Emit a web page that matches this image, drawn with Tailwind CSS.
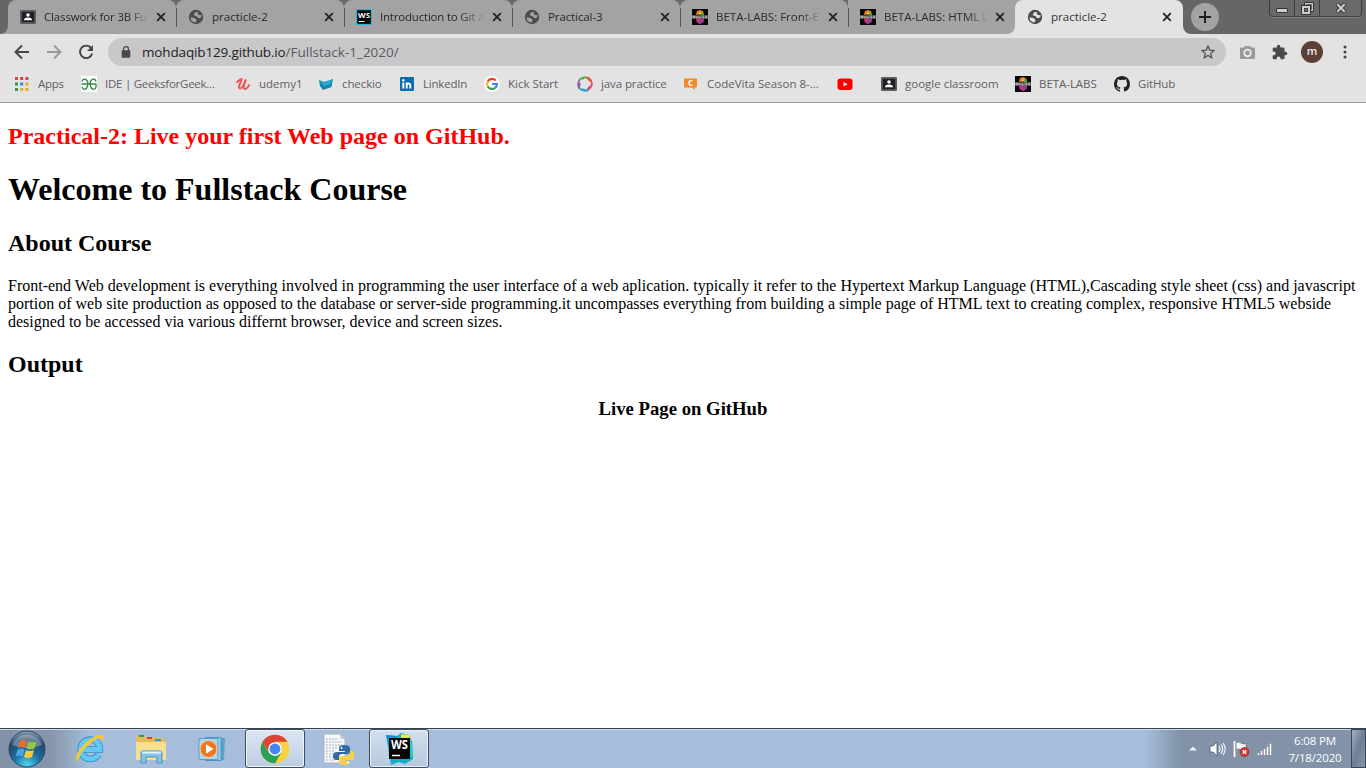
<!DOCTYPE html>
<html lang="en">
<head>
<meta charset="utf-8">
<title>practicle-2</title>
<script src="https://cdn.jsdelivr.net/npm/@tailwindcss/browser@4"></script>
</head>
<body class="w-[1366px] h-[768px] overflow-hidden bg-white flex flex-col font-['Open_Sans',sans-serif]">
<svg class="hidden">
  <defs>
    <symbol id="x" viewBox="0 0 10 10"><path d="M1.2 1.2l7.6 7.6M8.8 1.2l-7.6 7.6" stroke="#222" stroke-width="1.8"/></symbol>
    <symbol id="globe" viewBox="0 0 16 16"><circle cx="8" cy="8" r="7.2" fill="#4c4d50"/><g fill="var(--land,#a3a3a3)"><path d="M9.800 2.700L7.300 3.300 5.800 5.300l.7 1.500 2 .2 1.200 1.800 2 .4 1.700-1.400.2-1.800-1.300.3-1.800-.6-.8-1.500z"/><path d="M2.400 8.600l3.300.2 2.200 1.100.6 1.500-1.200 2.100-1.900-.5-2.100-1.800z"/></g></symbol>
    <symbol id="classroom" viewBox="0 0 16 16"><rect y="1" width="16" height="14" rx="1" fill="#5c5e64"/><rect x="1.8" y="2.8" width="12.4" height="10.4" fill="#1e2023"/><circle cx="8" cy="6" r="1.8" fill="#fff"/><path d="M3.8 11.3c.3-2 2-2.7 4.2-2.7s3.900.7 4.200 2.700z" fill="#fff"/></symbol>
    <symbol id="beta" viewBox="0 0 16 16"><path fill="#090909" d="M0 0h16v16H0z"/><path d="M5 2l3-1 3 1.300 1.200 3.500H3.800z" fill="#e9792d"/><path d="M6 5l3-3 2 3z" fill="#f4bc3d"/><path d="M9 3l3 1v3H9z" fill="#4da33d"/><path d="M4 9h8.500l-1 4L8 15.300 4.600 13z" fill="#d52e78"/><path d="M8 10h4l-1 3-3 2z" fill="#8a3f98"/><path d="M0 6.300h16v3.400H0z" fill="#626262"/><path d="M1 7.200v1.700h1.500V7.200zM4 9V7.200l2 1.700M7 7.200v1.700h1.500M10 9l1-1.700L12 9M13.200 7.200h1.500L13.500 9h1.500" stroke="#ccc" fill="none" stroke-width=".7"/></symbol>
  </defs>
</svg>

<!-- tab strip -->
<header class="h-[34px] shrink-0 bg-[#666] flex text-[11.5px] leading-4 text-[#2a2a2a]">
  <div class="w-2 bg-[#a3a3a3]"><div class="size-full bg-[#666] rounded-br-lg"></div></div>
  <div class="w-[168px] bg-[#a3a3a3] rounded-t-lg flex items-center pl-3"><svg class="size-4 mr-2 shrink-0"><use href="#classroom"/></svg><div class="w-[106px] mr-[6px] overflow-hidden whitespace-nowrap mask-r-from-80% tracking-[-0.15px]">Classwork for 3B Fu</div><svg class="size-[10px]"><use href="#x"/></svg></div>
  <div class="w-[168px] bg-[#a3a3a3] rounded-t-lg flex items-center pl-3 relative"><i class="absolute left-0 top-2 h-[19px] w-px bg-[#555]"></i><svg class="size-4 mr-2 shrink-0"><use href="#globe"/></svg><div class="w-[106px] mr-[6px] whitespace-nowrap">practicle-2</div><svg class="size-[10px]"><use href="#x"/></svg></div>
  <div class="w-[168px] bg-[#a3a3a3] rounded-t-lg flex items-center pl-3 relative"><i class="absolute left-0 top-2 h-[19px] w-px bg-[#555]"></i><svg class="size-4 mr-2 shrink-0" viewBox="0 0 16 16"><path fill="#25b7d3" d="M0 0h16v16H0z"/><path fill="#000" d="M1.200 1.200h13.600v13.600H1.200z"/><text x="2" y="8.800" font-size="7.500" font-weight="700" fill="#fff" textLength="12" lengthAdjust="spacingAndGlyphs">WS</text><path d="M3 12.500h5.500" stroke="#fff"/></svg><div class="w-[106px] mr-[6px] overflow-hidden whitespace-nowrap mask-r-from-75% tracking-[-0.2px]">Introduction to Git a</div><svg class="size-[10px]"><use href="#x"/></svg></div>
  <div class="w-[168px] bg-[#a3a3a3] rounded-t-lg flex items-center pl-3 relative"><i class="absolute left-0 top-2 h-[19px] w-px bg-[#555]"></i><svg class="size-4 mr-2 shrink-0"><use href="#globe"/></svg><div class="w-[106px] mr-[6px] whitespace-nowrap tracking-[-0.1px]">Practical-3</div><svg class="size-[10px]"><use href="#x"/></svg></div>
  <div class="w-[168px] bg-[#a3a3a3] rounded-t-lg flex items-center pl-3 relative"><i class="absolute left-0 top-2 h-[19px] w-px bg-[#555]"></i><svg class="size-4 mr-2 shrink-0"><use href="#beta"/></svg><div class="w-[106px] mr-[6px] overflow-hidden whitespace-nowrap mask-r-from-80%">BETA-LABS: Front-E</div><svg class="size-[10px]"><use href="#x"/></svg></div>
  <div class="w-[167px] bg-[linear-gradient(90deg,#a3a3a3_50%,#e3e3e3_50%)]"><div class="size-full bg-[#a3a3a3] rounded-tl-lg rounded-br-lg flex items-center pl-3 relative"><i class="absolute left-0 top-2 h-[19px] w-px bg-[#555]"></i><svg class="size-4 mr-2 shrink-0"><use href="#beta"/></svg><div class="w-[105px] mr-[6px] overflow-hidden whitespace-nowrap mask-r-from-80%">BETA-LABS: HTML L</div><svg class="size-[10px]"><use href="#x"/></svg></div></div>
  <div class="w-[168px] bg-[linear-gradient(90deg,#a3a3a3_50%,#666_50%)]"><div class="size-full bg-[#e3e3e3] rounded-t-lg flex items-center pl-3 [--land:#e3e3e3]"><svg class="size-4 mr-2 shrink-0"><use href="#globe"/></svg><div class="w-[106px] mr-[5px] whitespace-nowrap text-[#333]">practicle-2</div><svg class="size-[10px]"><use href="#x"/></svg></div></div>
  <div class="w-2 bg-[#e3e3e3]"><div class="size-full bg-[#666] rounded-bl-lg"></div></div>
  <div class="size-7 mt-[3px] rounded-full bg-[#a3a3a3] flex items-center justify-center"><svg class="size-3" viewBox="0 0 12 12"><path d="M6 0v12M0 6h12" stroke="#222" stroke-width="2"/></svg></div>
  <div class="ml-[50px] h-[17px] w-[93px] border border-t-0 border-[#3d3d3d] rounded-b flex bg-[#696969] shadow-[0_1px_0_#808080]">
    <div class="w-[25px] border-r border-[#3d3d3d] flex justify-center pt-[8px]"><div class="w-3 h-[5px] border border-[#333] bg-[#ccc] rounded-[1px]"></div></div>
    <div class="w-[25px] border-r border-[#3d3d3d] flex justify-center pt-[2px]"><svg class="size-[13px]" viewBox="0 0 13 13"><path d="M3.500.500h9v9h-9z" fill="#ccc" stroke="#333"/><path d="M5.500 2.500h5v5h-5z" fill="#666" stroke="#333" stroke-width=".5"/><path d="M.500 3.500h9v9h-9z" fill="#ccc" stroke="#333"/><path d="M3.500 6.500h3v3h-3z" fill="#777" stroke="#333"/></svg></div>
    <div class="flex-1 flex justify-center pt-[3px]"><svg class="w-3 h-[10px]" viewBox="0 0 12 10"><path d="M2 1l8 8M10 1L2 9" stroke="#333" stroke-width="3.800"/><path d="M2.300 1.300l7.400 7.400M9.700 1.300L2.300 8.700" stroke="#d0d0d0" stroke-width="2"/></svg></div>
  </div>
</header>

<!-- toolbar -->
<div class="h-9 shrink-0 bg-[#e3e3e3] flex items-center pl-[14px] text-[13.5px]">
  <svg class="w-4 h-4" viewBox="0 0 16 16" fill="none" stroke="#444" stroke-width="1.900"><path d="M15 8H2M8 1.500L1.500 8 8 14.500"/></svg>
  <svg class="w-4 h-4 ml-4" viewBox="0 0 16 16" fill="none" stroke="#999" stroke-width="1.900"><path d="M1 8h13M8 1.500L14.500 8 8 14.500"/></svg>
  <svg class="w-4 h-4 ml-4" viewBox="0 0 16 16"><path d="M13.300 4.300A6.200 6.200 0 1 0 14.200 9.500" fill="none" stroke="#444" stroke-width="1.900"/><path d="M15 1v6H9z" fill="#444"/></svg>
  <div class="ml-[14px] w-[1118px] h-7 rounded-full bg-[#c8c8ca] flex items-center pl-[13px] whitespace-nowrap">
    <svg class="w-[10px] h-[12px]" viewBox="0 0 10 12"><path d="M2.500 5V3.200a2.500 2.500 0 0 1 5 0V5" fill="none" stroke="#4a4a4c" stroke-width="1.300"/><rect x=".7" y="4.200" width="8.600" height="7.500" rx="1" fill="#4a4a4c"/></svg>
    <span class="ml-[11px] text-[#222] tracking-[-0.15px]">mohdaqib129.github.io</span><span class="text-[#5a5a5c]">/Fullstack-1_2020/</span>
    <svg class="w-[14px] h-[14px] ml-auto mr-[11px]" viewBox="0 0 14 14"><path d="M7 1l1.700 4.100 4.500.4-3.400 2.900 1 4.400L7 10.500l-3.800 2.300 1-4.400L.8 5.500l4.500-.4z" fill="none" stroke="#4c4c4e" stroke-width="1.200"/></svg>
  </div>
  <svg class="w-[15px] h-[13px] ml-[14px]" viewBox="0 0 15 13"><path d="M5 0h5l1 1.500h3q1 0 1 1V12q0 1-1 1H1q-1 0-1-1V2.500q0-1 1-1h3z" fill="#999"/><circle cx="7.500" cy="7" r="3.300" fill="none" stroke="#eee" stroke-width="1.700"/></svg>
  <svg class="size-4 ml-[17px]" viewBox="1 0 23 23"><path fill="#4a4a4c" d="M20.500 11H19V7a2 2 0 0 0-2-2h-4V3.500a2.500 2.500 0 0 0-5 0V5H4a2 2 0 0 0-2 2v3.800h1.500a2.700 2.700 0 0 1 0 5.400H2V20a2 2 0 0 0 2 2h3.800v-1.500a2.700 2.700 0 0 1 5.400 0V22H17a2 2 0 0 0 2-2v-4h1.500a2.500 2.500 0 0 0 0-5z"/></svg>
  <div class="size-[22px] rounded-full bg-[#5d3f37] text-[#eee] text-[11px] leading-[20px] text-center ml-[13px] font-semibold">m</div>
  <svg class="w-1 h-[14px] ml-[20px]" viewBox="0 0 4 14" fill="#444"><circle cx="2" cy="2" r="1.500"/><circle cx="2" cy="7" r="1.500"/><circle cx="2" cy="12" r="1.500"/></svg>
</div>

<!-- bookmarks -->
<nav class="h-[33px] shrink-0 bg-[#e3e3e3] border-b border-[#999] pl-[14px] pb-[5px] text-[11.5px] text-[#5f6063] flex items-center whitespace-nowrap *:flex *:items-center *:gap-2 *:shrink-0">
  <div class="w-[67px]"><svg class="size-4" viewBox="0 0 16 16"><path d="M1 2.500h3M6.200 2.500h3M11.400 2.500h3" stroke="#d64137" stroke-width="3"/><path d="M1 8h3M1 13.500h3" stroke="#2d9b4e" stroke-width="3"/><path d="M6.200 8h3" stroke="#3e7fe0" stroke-width="3"/><path d="M11.400 8h3M6.200 13.500h3M11.400 13.500h3" stroke="#e8ac22" stroke-width="3"/></svg><span class="tracking-[-0.3px]">Apps</span></div>
  <div class="w-[154px]"><svg class="size-4" viewBox="0 0 16 16"><path fill="#fff" d="M0 0h16v16H0z"/><path d="M.5 8h15M1 5.500C1.500 3 4 2.500 5.500 4S7 9 6 11.500 1.500 14 1 11M15 5.500C14.500 3 12 2.500 10.500 4S9 9 10 11.500s4.500 2.500 5-.500V8" fill="none" stroke="#358a43" stroke-width="1.400"/></svg><span class="tracking-[-0.25px]">IDE | GeeksforGeek...</span></div>
  <div class="w-[83px]"><svg class="size-4" viewBox="0 0 16 16"><path d="M1.500 6.500C4 5 5.500 2.500 6.500 3S3.500 9.500 4 11.500s3.500.5 5-3.500L11 3.500M11 3.500C9.500 7 7.500 12 9.500 12.800S13 11 14.500 8.500" fill="none" stroke="#e8585d" stroke-width="2"/></svg><span>udemy1</span></div>
  <div class="w-[81px]"><svg class="size-4" viewBox="0 0 16 16"><path d="M1 4l5 2 9-3-1.500 8L5 14l-3-4z" fill="#1387ae"/><path d="M1 4l5 3 9-4-3 5-6 2z" fill="#29aed3"/></svg><span class="tracking-[-0.1px]">checkio</span></div>
  <div class="w-[85px]"><svg class="size-4" viewBox="0 0 16 16"><rect x="1" y="1" width="14" height="14" rx="1" fill="#0a6fae"/><path d="M4.300 6.500v6M7.700 6.500v6M7.700 9.300c0-2.300 3.600-2.500 3.600 0v3.200" fill="none" stroke="#fff" stroke-width="1.900"/><circle cx="4.300" cy="4.200" r="1.200" fill="#fff"/></svg><span class="tracking-[-0.2px]">LinkedIn</span></div>
  <div class="w-[93px]"><svg class="size-4" viewBox="0 0 16 16"><circle cx="8" cy="8" r="8" fill="#fff"/><g fill="none" stroke-width="2.200"><path d="M11.800 4.500A5 5 0 0 0 3.700 5.500" stroke="#e34133"/><path d="M3.700 5.500a5 5 0 0 0 0 5" stroke="#f3b51d"/><path d="M3.700 10.500a5 5 0 0 0 7.500 1.300" stroke="#33a353"/><path d="M11.200 11.800A5 5 0 0 0 12.900 8H8" stroke="#4081ec"/></g></svg><span>Kick Start</span></div>
  <div class="w-[106px]"><svg class="size-4" viewBox="0 0 16 16" fill="none" stroke-width="1.500"><path d="M2 4.500Q4 1 8 1.200L12 3M5 3.500L8 1.200" stroke="#55a94d"/><path d="M9 1.200q5 .5 5.800 5.300L14.500 10M11 3l3.800 3.500" stroke="#e05a3a"/><path d="M14.800 7.500q0 5-5.300 7.200M13 10l-3.500 4.700" stroke="#de4380"/><path d="M11 14.500Q5 16 2 11.500M5 13l5 1.500" stroke="#2ba6d4"/><path d="M2.300 12.500Q-.5 8 3 3.500M3 7l-1 4.500" stroke="#8a5aa4"/></svg><span class="tracking-[-0.1px]">java practice</span></div>
  <div class="w-[154px]"><svg class="size-4" viewBox="0 0 16 16"><path d="M1 2.500h12q1 0 1 1v7q0 1-1 1h-1.500V14l-3-2.500H1z" fill="#f08a2b"/><text x="5" y="9.900" font-size="8" font-weight="700" fill="#fff">C</text></svg><span>CodeVita Season 8-...</span></div>
  <div class="w-[44px]"><svg class="size-4" viewBox="0 0 16 16"><rect x=".5" y="2.500" width="15" height="11.500" rx="3" fill="#f00"/><path d="M6.500 6v4.600l4-2.300z" fill="#fff"/></svg></div>
  <div class="w-[134px]"><svg class="size-4"><use href="#classroom"/></svg><span>google classroom</span></div>
  <div class="w-[99px]"><svg class="size-4"><use href="#beta"/></svg><span class="tracking-[-0.05px]">BETA-LABS</span></div>
  <div><svg class="size-4" viewBox="0 0 16 16"><path fill="#1f2327" d="M8 0C3.580 0 0 3.580 0 8c0 3.540 2.290 6.530 5.470 7.590.4.070.55-.17.55-.38v-1.490c-2.230.48-2.700-.94-2.700-.94-.36-.93-.89-1.170-.89-1.170-.73-.5.050-.49.050-.49.8.060 1.230.83 1.230.83.72 1.230 1.880.87 2.340.67.070-.52.280-.87.500-1.070-1.780-.2-3.640-.89-3.640-3.950 0-.87.310-1.590.82-2.150-.08-.2-.36-1.020.08-2.120 0 0 .67-.21 2.200.82A7.700 7.700 0 0 1 8 3.870c.68 0 1.360.09 2 .27 1.530-1.040 2.200-.82 2.200-.82.44 1.100.16 1.920.08 2.120.51.56.82 1.270.82 2.150 0 3.070-1.870 3.750-3.650 3.950.29.25.54.73.54 1.480v2.200c0 .21.15.46.55.38A8 8 0 0 0 16 8c0-4.420-3.580-8-8-8z"/></svg><span class="tracking-[-0.15px]">GitHub</span></div>
</nav>

<!-- page -->
<main class="flex-1 min-h-0 px-2 font-['Liberation_Serif',serif] text-black text-[16px] leading-[18px] whitespace-nowrap">
  <h2 class="mt-[20px] text-[24px] leading-[27px] font-bold text-[#f00]">Practical-2: Live your first Web page on GitHub.</h2>
  <h1 class="mt-[21px] text-[32px] leading-[37px] font-bold">Welcome to Fullstack Course</h1>
  <h2 class="mt-[22px] text-[24px] leading-[27px] font-bold">About Course</h2>
  <p class="mt-[20px]">Front-end Web development is everything involved in programming the user interface of a web aplication. typically it refer to the Hypertext Markup Language (HTML),Cascading style sheet (css) and javascript<br>portion of web site production as opposed to the database or server-side programming.it uncompasses everything from building a simple page of HTML text to creating complex, responsive HTML5 webside<br>designed to be accessed via various differnt browser, device and screen sizes.</p>
  <h2 class="mt-[20px] text-[24px] leading-[27px] font-bold">Output</h2>
  <h3 class="mt-[20px] text-[18.72px] leading-[21px] font-bold text-center">Live Page on GitHub</h3>
</main>

<!-- taskbar -->
<footer class="h-10 shrink-0 border-t border-[#38414f] flex items-center shadow-[inset_0_1px_0_#cfdcec] bg-[linear-gradient(90deg,#8292a8_0,#8595ab_50px,#a6bedb_90px,#a6bedb_1145px,#8293a9_1180px,#8293a9_100%)]">
  <svg class="ml-[8px] size-[38px]" viewBox="0 0 38 38"><defs><radialGradient id="orb" cx=".5" cy=".95" r=".95"><stop offset="0" stop-color="#4fd8f0"/><stop offset=".4" stop-color="#1c6ea3"/><stop offset=".75" stop-color="#24466b"/><stop offset="1" stop-color="#8ea5bc"/></radialGradient></defs><circle cx="19" cy="19" r="18" fill="url(#orb)" stroke="#2b4867"/><path d="M4 15a16 16 0 0 1 30 0q-15 6-30 0" fill="#fff" opacity=".3"/><path d="M12 11q3-2 7 0l-2 7q-3-2-7 0z" fill="#ee6a2c"/><path d="M20.500 11.500q4 2 8 0l-2 7q-4 2-8 0z" fill="#95c83d"/><path d="M9.600 19.500q4-2 7 0l-2 7q-3-2-7 0z" fill="#4aa4e3"/><path d="M18 20q4 2 8 0l-2 7q-4 2-8 0z" fill="#fcc936"/></svg>
  <svg class="ml-[28px] w-8 h-8" viewBox="0 0 32 32"><path d="M24.500 21.500A9.700 9.700 0 1 1 26 16.500H9" fill="none" stroke="#2b8fd0" stroke-width="6.500"/><path d="M24.500 21.500A9.700 9.700 0 1 1 26 16.500H9" fill="none" stroke="#64c8f3" stroke-width="4.800"/><path d="M4 29C-3 24 12 5 25 2c5-1 6 2 4 7 0-4-3-5-8-2C11 13 4 23 4 29z" fill="#f5c83a"/></svg>
  <svg class="ml-[29px] w-8 h-8" viewBox="0 0 32 32"><path d="M1 4q0-2 2-2h7l2 2h8l2 1h8v21H1z" fill="#e3bd5b"/><path d="M4 3h5" stroke="#2b9c44" stroke-width="2"/><path d="M12 5h5" stroke="#ce4938" stroke-width="2"/><path d="M20 7h6" stroke="#3f91cc" stroke-width="2"/><path d="M1 9h30v17q0 1-1 1H2q-1 0-1-1z" fill="#f7df8f"/><path d="M6 30V20q0-2 2-2h17q2 0 2 2v10h-5v-6H11v6z" fill="#83c3e8" stroke="#4c8fbd"/><path d="M7 19.500h19" stroke="#dff4ff" stroke-width="2"/></svg>
  <svg class="ml-[31px] w-[28px] h-[28px]" viewBox="0 0 28 28"><path d="M8 3h19l-1 22H9z" fill="#5aa2cb"/><path d="M7 2.500h16v23H7z" fill="#9ed0ea" stroke="#4a93bf"/><path d="M1 3.500h19v21H1z" fill="#a8d6ee" stroke="#5a9fc6"/><circle cx="10.500" cy="14" r="8.500" fill="#ef7620" stroke="#f8cda5"/><path d="M8 9.300v9.400l7.500-4.700z" fill="#fff"/></svg>
  <div class="ml-[19px] w-[60px] h-[39px] border border-[#3e4b5d] rounded-[3px] bg-linear-to-b from-[#dce6f2] to-[#bccee3] shadow-[inset_0_0_0_1px_#eff5fb] flex items-center justify-center"><svg class="size-[30px]" viewBox="0 0 48 48"><circle cx="24" cy="24" r="23" fill="#fcd043"/><path d="M4.100 12.500A23 23 0 0 0 24 47L34 29.500H14z" fill="#2e9f56"/><path d="M4.100 12.500A23 23 0 0 1 43.900 12.500H24L14.500 29.500z" fill="#dc4437"/><circle cx="24" cy="24" r="11" fill="#fff"/><circle cx="24" cy="24" r="8.700" fill="#4285f4"/></svg></div>
  <svg class="ml-[17px] w-[32px] h-[32px]" viewBox="0 0 32 32"><path d="M2 1h16l5 5v24H2z" fill="#f4f6f8" stroke="#aab3be"/><path d="M18 1v5h5" fill="#ccd3db"/><path d="M4 6h11M4 9h16M4 12h16M4 15h12M4 18h8M4 21h8M4 24h8M4 27h8" stroke="#a9b1bb" stroke-dasharray="2 1"/><path d="M22 12q-5 0-5 3v3h6v1h-8q-4 0-4 4t3 4h3v-3q0-3 3-3h5q3 0 3-3v-3q0-3-6-3z" fill="#2f6ca3"/><path d="M23 32q-6 0-6-3v-3q0-3 3-3h5q3 0 3-3v-2h2q3 0 3 4t-3 5h-7v1h5q0 4-5 4z" fill="#fbd044"/><circle cx="19.500" cy="15" r="1" fill="#fff"/><circle cx="26" cy="29.500" r="1" fill="#fff"/></svg>
  <div class="ml-[15px] w-[60px] h-[39px] border border-[#3e4b5d] rounded-[3px] bg-linear-to-b from-[#d4e0ed] to-[#b4c8df] shadow-[inset_0_0_0_1px_#eaf1f9] flex items-center justify-center"><svg class="size-[34px]" viewBox="0 0 34 34"><path d="M4 3l11 1 4-3 8 2 3 6 1 18-8 5-6-2-8 3z" fill="#11aec7"/><path d="M19 2l8 1 2 6-10 1z" fill="#e7ed42"/><path d="M4 3l11 1-2 10-5 4z" fill="#1790cf"/><path d="M24 9l6 2 1 12-6 6z" fill="#22d1c0"/><path fill="#050505" d="M7 6h21v21H7z"/><text x="9" y="17" font-size="11.500" font-weight="700" fill="#fff" textLength="17" lengthAdjust="spacingAndGlyphs">WS</text><path d="M10 23.500h8" stroke="#fff" stroke-width="1.500"/></svg></div>
  <svg class="ml-auto w-[8px] h-[5px]" viewBox="0 0 8 5"><path d="M0 4.500L4 .5l4 4z" fill="#eef3f8"/></svg>
  <svg class="ml-[12px] w-[17px] h-4" viewBox="0 0 17 16"><path d="M1 5h3l4-4v14l-4-4H1z" fill="#fff" stroke="#4a586b" stroke-width=".8"/><path d="M10 5q2 3 0 6M12 3.500q3.500 4.500 0 9M14 2q4.500 6 0 12" fill="none" stroke="#fff" stroke-width="1.100"/></svg>
  <svg class="ml-[7px] w-[17px] h-4" viewBox="0 0 17 16"><path d="M1.500 0v16" stroke="#fff" stroke-width="1.800"/><path d="M3 1.500q3-1 5 .5t5 .5v7q-3 0-5-1t-5 0z" fill="#f4f6f8" stroke="#5b687a" stroke-width=".6"/><circle cx="11.500" cy="11" r="4.500" fill="#d2342c" stroke="#8d2420" stroke-width=".6"/><path d="M9.700 9.200l3.600 3.600M13.300 9.200l-3.600 3.600" stroke="#fff" stroke-width="1.400"/></svg>
  <svg class="ml-[7px] w-[16px] h-[14px]" viewBox="0 0 16 14"><path d="M1.500 13v-2M4.500 13v-4M7.500 13V7M10.500 13V4.500M13.500 13V1.500" stroke="#44536a" stroke-width="3"/><path d="M1.500 13v-2M4.500 13v-4M7.500 13V7M10.500 13V4.500M13.500 13V1.500" stroke="#fff" stroke-width="2"/></svg>
  <div class="ml-[15px] w-[54px] text-[11.5px] leading-[17px] text-white text-center whitespace-nowrap tracking-[-0.15px]">6:08 PM<br>7/18/2020</div>
  <div class="ml-[9px] w-[15px] h-[39px] border border-[#39475a] bg-linear-to-br from-[#a2afbf] via-[#6e7f95] to-[#8798ad]"></div>
</footer>
</body>
</html>
